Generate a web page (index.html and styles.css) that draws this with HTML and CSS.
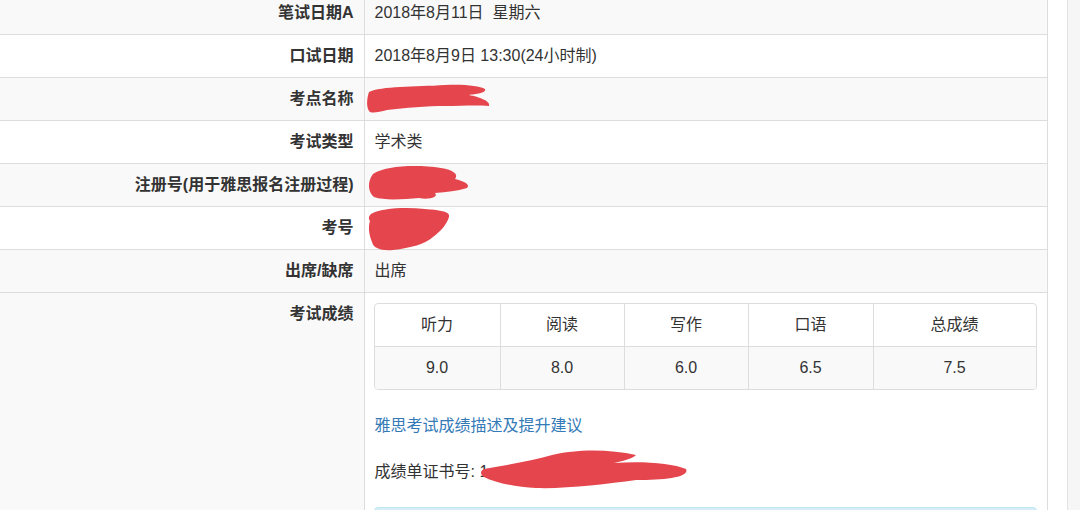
FILE: index.html
```html
<!DOCTYPE html>
<html lang="zh-CN">
<head>
    <meta charset="UTF-8">
    <meta name="viewport" content="width=device-width, initial-scale=1.0">
    <title>成绩查询</title>
    <link rel="stylesheet" href="styles.css">
</head>
<body>

<div class="page">
    <div class="main-content">
        <table class="info-table">
            <colgroup>
                <col class="label-col">
                <col>
            </colgroup>
            <tr class="striped">
                <th>笔试日期A</th>
                <td>2018年8月11日&nbsp; 星期六</td>
            </tr>
            <tr>
                <th>口试日期</th>
                <td>2018年8月9日 13:30(24小时制)</td>
            </tr>
            <tr class="striped">
                <th>考点名称</th>
                <td>
                    <!-- redacted -->
                    <svg class="scribble" width="116" height="22" viewBox="0 0 116 22">
                        <path d="M-6 4 C6 -2 40 -1 70 -3 C90 -4 104 -2 110 1 C112 5 100 6 94 7 C104 9 116 13 114 18 C100 17 86 18 70 18 C52 18 30 20 12 22 C4 24 -4 26 -6 23 C-9 18 -8 10 -6 4 Z"/>
                    </svg>
                </td>
            </tr>
            <tr>
                <th>考试类型</th>
                <td>学术类</td>
            </tr>
            <tr class="striped">
                <th>注册号(用于雅思报名注册过程)</th>
                <td>
                    <svg class="scribble" width="94" height="22" viewBox="0 0 94 22">
                        <path d="M-2 0 C10 -8 40 -10 66 -6 C78 -4 84 0 80 5 C88 7 96 10 92 14 C82 17 72 18 60 19 C64 23 54 26 44 24 C30 25 10 27 -1 23 C-7 18 -8 8 -2 0 Z"/>
                    </svg>
                </td>
            </tr>
            <tr>
                <th>考号</th>
                <td>
                    <svg class="scribble" width="74" height="22" viewBox="0 0 74 22">
                        <path d="M-4 -3 C6 -9 30 -10 50 -8 C62 -7 76 -6 74 0 C72 7 66 14 58 20 C50 27 36 31 18 33 C6 34 -2 31 -3 25 C-6 18 -7 10 -5 4 C-7 1 -6 -1 -4 -3 Z"/>
                    </svg>
                </td>
            </tr>
            <tr class="striped">
                <th>出席/缺席</th>
                <td>出席</td>
            </tr>
            <tr class="score-row">
                <th>考试成绩</th>
                <td>
                    <div class="score-panel">
                        <table class="score-table">
                            <tr>
                                <th class="w-a">听力</th>
                                <th class="w-b">阅读</th>
                                <th class="w-b">写作</th>
                                <th class="w-c">口语</th>
                                <th>总成绩</th>
                            </tr>
                            <tr class="striped">
                                <td>9.0</td>
                                <td>8.0</td>
                                <td>6.0</td>
                                <td>6.5</td>
                                <td>7.5</td>
                            </tr>
                        </table>
                    </div>

                    <div class="score-extra">
                        <a href="#" class="advice-link">雅思考试成绩描述及提升建议</a>
                        <p class="cert-no">成绩单证书号: 1<svg class="scribble cert" width="200" height="22" viewBox="0 0 200 22">
                            <path d="M-2 8 C20 4 46 0 66 -6 C90 -12 124 -12 150 -6 C146 -2 136 0 128 2 C156 0 186 2 200 8 C204 16 180 19 150 19 C120 23 80 28 50 27 C30 26 10 22 -2 16 C-6 13 -6 10 -2 8 Z"/>
                        </svg></p>
                        <div class="info-box"></div>
                    </div>
                </td>
            </tr>
        </table>
    </div>
    <div class="spacer"></div>
    <div class="scroll-track"></div>
</div>

</body>
</html>
```

FILE: styles.css
```css
html, body {
    height: 100%;
    margin: 0;
    padding: 0;
    font-family: "Liberation Sans", "Noto Sans CJK SC", sans-serif;
    color: #333;
    background: #fff;
    overflow: hidden;
}

.page {
    display: flex;
    height: 100%;
}

.main-content {
    width: 1048px;
    flex-shrink: 0;
    margin-top: -9px; /* first row is cut off at the top */
}

.spacer {
    flex: 1;
}

.scroll-track {
    width: 12px;
    border-left: 1px solid #e3e3e3;
    background: #f6f6f6;
}

/* main info table */
.info-table {
    width: 1048px;
    border-collapse: collapse;
    table-layout: fixed;
    font-size: 16px;
    line-height: 22px;
}

.info-table .label-col {
    width: 364px;
}

.info-table > tbody > tr > th,
.info-table > tbody > tr > td {
    padding: 10px;
    border-top: 1px solid #ddd;
    border-bottom: 1px solid #ddd;
    vertical-align: top;
}

.info-table > tbody > tr > th {
    text-align: right;
    font-weight: bold;
    border-right: 1px solid #ddd;
}

.info-table > tbody > tr > td {
    text-align: left;
    border-right: 1px solid #ddd;
}

.info-table > tbody > tr.striped > th,
.info-table > tbody > tr.striped > td {
    background: #f9f9f9;
}

.info-table > tbody > tr.score-row > th {
    background: #f9f9f9;
}

.scribble {
    display: inline-block;
    vertical-align: top;
    overflow: visible;
    fill: #e5464e;
}

.scribble.cert {
    margin-left: -2px;
}

/* scores */
.score-panel {
    box-sizing: border-box;
    width: 663px;
    margin-left: -1px;
    border: 1px solid #ddd;
    border-radius: 4px;
    overflow: hidden;
}

.score-table {
    width: 100%;
    border-collapse: collapse;
    font-size: 16px;
    line-height: 22px;
}

.score-table th,
.score-table td {
    padding: 10px;
    text-align: center;
    font-weight: normal;
    border-left: 1px solid #ddd;
}

.score-table th:first-child,
.score-table td:first-child {
    border-left: none;
}

.score-table th {
    border-bottom: 1px solid #ddd;
}

.score-table tr.striped td {
    background: #f9f9f9;
}

.score-table .w-a {
    width: 105px;
}

.score-table .w-b {
    width: 103px;
}

.score-table .w-c {
    width: 104px;
}

.score-extra {
    display: flex;
    flex-direction: column;
    align-items: flex-start;
    gap: 24px;
    margin-top: 25px;
}

.advice-link {
    color: #337ab7;
    text-decoration: none;
}

.cert-no {
    margin: 0;
}

.info-box {
    box-sizing: border-box;
    width: 663px;
    height: 30px;
    margin-left: -1px;
    background: #d9edf7;
    border: 1px solid #bce8f1;
    border-radius: 4px;
}
```
